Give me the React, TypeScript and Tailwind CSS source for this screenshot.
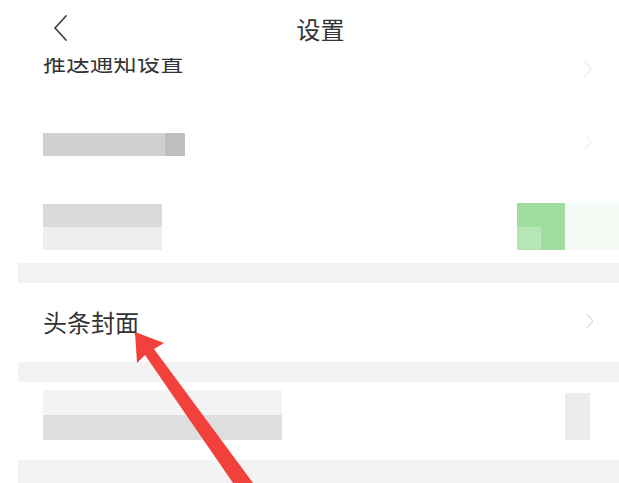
import React from "react";

const font = { fontFamily: '"Noto Sans CJK SC", "Noto Sans", sans-serif' };

function Chevron({ color = "#e3e3e3" }: { color?: string }) {
  return (
    <svg width="10" height="18" viewBox="0 0 10 18" fill="none">
      <path d="M2 2 L8 9 L2 16" stroke={color} strokeWidth="1.6" strokeLinecap="round" strokeLinejoin="round" />
    </svg>
  );
}

export default function App() {
  return (
    <div className="relative w-[619px] h-[483px] overflow-hidden bg-white text-[#333]" style={font}>
      {/* header */}
      <div className="relative h-[58px] flex items-start justify-center bg-white">
        <div className="absolute left-[50px] top-[13px]">
          <svg width="20" height="30" viewBox="0 0 20 30" fill="none">
            <path d="M16 3 L5 15 L16 27" stroke="#444" strokeWidth="1.8" strokeLinecap="round" strokeLinejoin="round" />
          </svg>
        </div>
        <span className="text-[24px] leading-none text-[#333] pt-[17px] pl-[22px]">设置</span>
      </div>

      {/* row 1 clipped */}
      <div className="h-[42px] overflow-hidden flex items-start justify-between pl-[43px] pr-[26px]">
        <span className="text-[23px] leading-[24px] -mt-[9px] text-[#333] tracking-[0.5px]">推送通知设置</span>
        <div className="mt-[2px] opacity-40"><Chevron color="#ddd" /></div>
      </div>

      {/* row 2 blurred */}
      <div className="h-[70px] flex items-start justify-between pl-[43px] pr-[26px] pt-[33px]">
        <div className="flex h-[23px] w-[142px]">
          <div className="flex-1 bg-[#d0d0d0]" />
          <div className="w-[20px] bg-[#bfbfbf]" />
        </div>
        <div className="opacity-30"><Chevron color="#ddd" /></div>
      </div>

      {/* row 3 blurred with green */}
      <div className="h-[93px] flex items-start justify-between pl-[43px] pt-[34px]">
        <div className="flex flex-col w-[119px]">
          <div className="h-[23px] bg-[#dadada]" />
          <div className="h-[23px] bg-[#eeeeee]" />
        </div>
        <div className="flex items-center -mt-[1px]">
          <div className="relative w-[48px] h-[47px] bg-[#9edc9f]">
            <div className="absolute left-0 bottom-0 w-[24px] h-[23px] bg-[#b6e6b6]" />
          </div>
          <div className="w-[54px] h-[47px] bg-[#f5fbf5]" />
        </div>
      </div>

      {/* band */}
      <div className="h-[20px] ml-[18px] bg-[#f3f3f3]" />

      {/* 头条封面 */}
      <div className="h-[79px] flex items-center justify-between pl-[43px] pr-[24px]">
        <span className="text-[24px] leading-none text-[#333] -mt-[2px]">头条封面</span>
        <div className="-mt-[4px]"><Chevron color="#e2e2e2" /></div>
      </div>

      {/* band */}
      <div className="h-[20px] ml-[18px] bg-[#f3f3f3]" />

      {/* row blurred */}
      <div className="h-[78px] flex items-start justify-between pl-[43px] pr-[29px] pt-[8px]">
        <div className="flex flex-col w-[239px]">
          <div className="h-[25px] bg-[#f4f4f4]" />
          <div className="h-[25px] bg-[#dedede]" />
        </div>
        <div className="w-[25px] h-[47px] bg-[#ececec] mt-[3px]" />
      </div>

      {/* band */}
      <div className="h-[23px] ml-[18px] bg-[#f3f3f3]" />

      {/* red arrow */}
      <svg className="absolute left-0 top-0 pointer-events-none" width="619" height="483" viewBox="0 0 619 483">
        <polygon
          points="135,332 164,343 154,349 253,483 233,483 145,355 137,363"
          fill="#f2403a"
        />
      </svg>
    </div>
  );
}
